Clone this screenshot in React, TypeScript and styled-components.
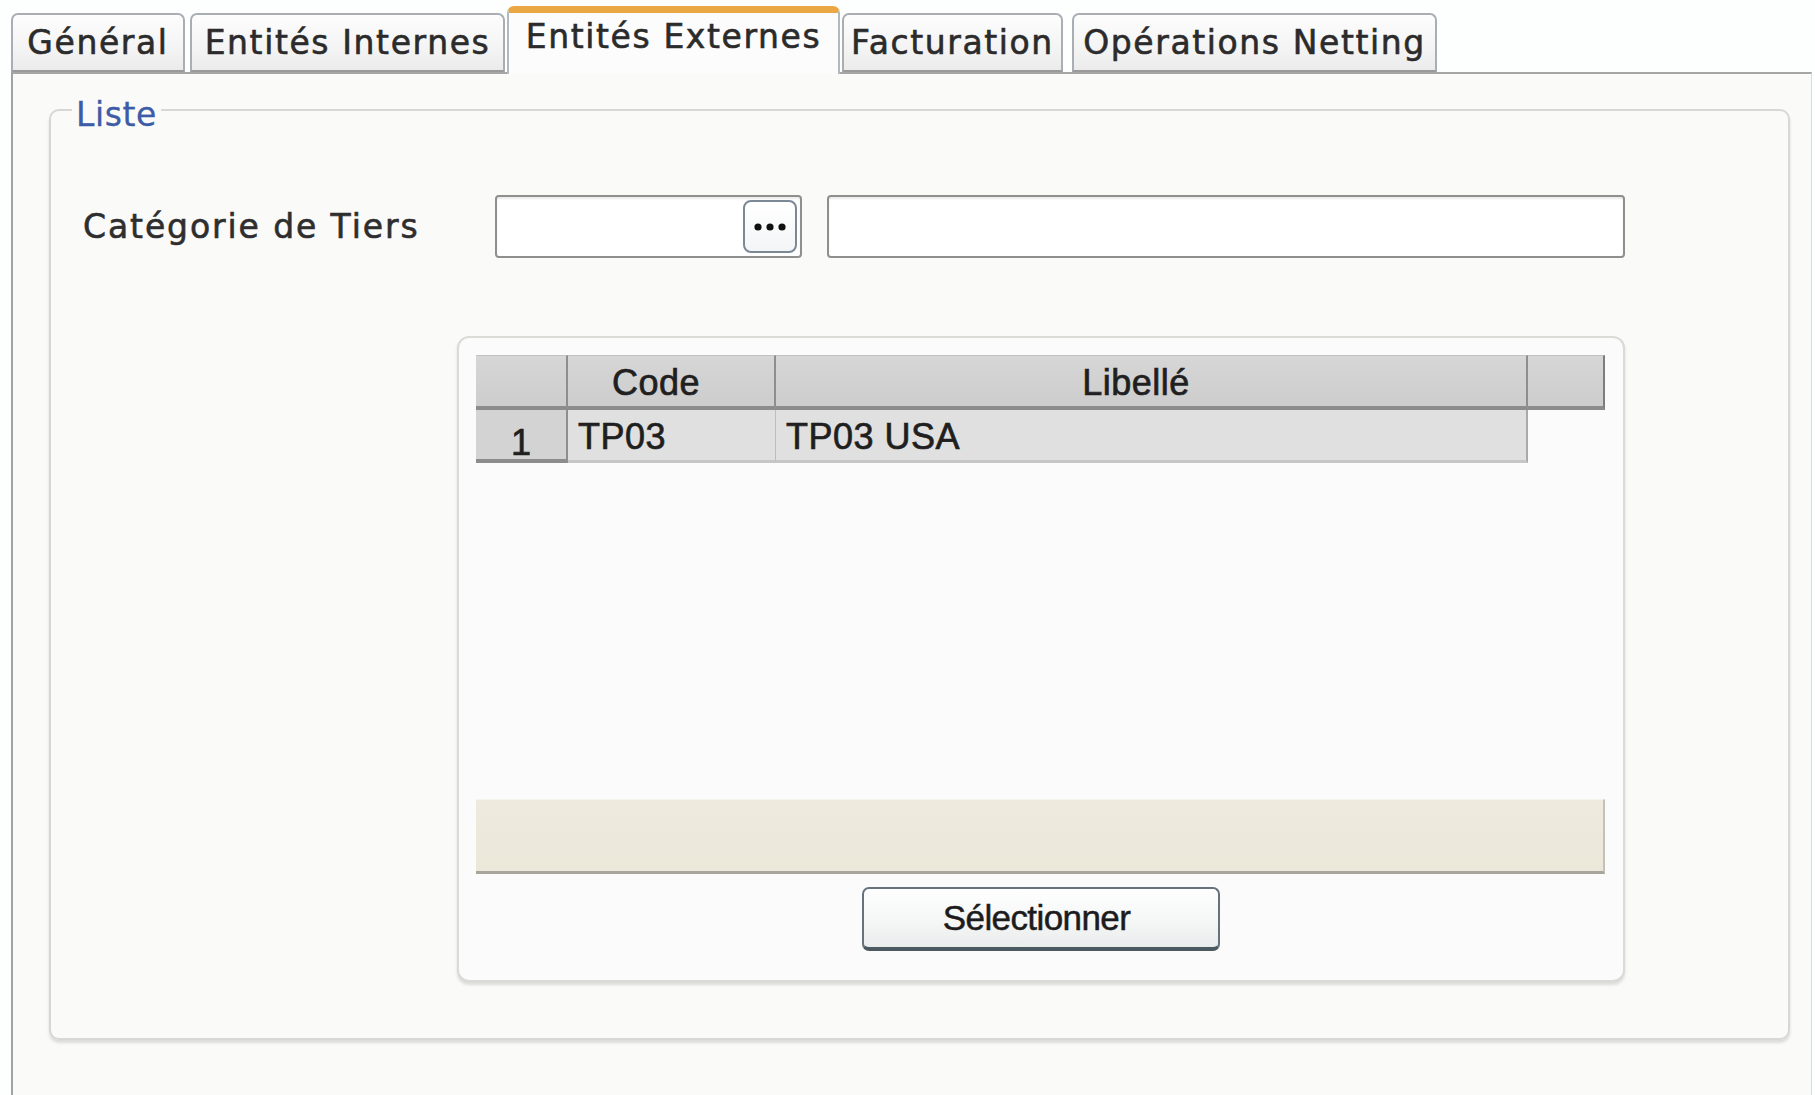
import React from "react";
import styled, { createGlobalStyle } from "styled-components";

const GlobalStyle = createGlobalStyle`
  html, body {
    margin: 0;
    padding: 0;
    background: #fdfefe;
  }
  #root {
    height: 100vh;
  }
  * {
    box-sizing: border-box;
  }
`;

const Page = styled.div`
  height: 100vh;
  display: flex;
  flex-direction: column;
  font-family: "DejaVu Sans", Verdana, sans-serif;
  color: #2a2a2a;
  overflow: hidden;
`;

const TabBar = styled.div`
  display: flex;
  align-items: flex-end;
  height: 72px;
  padding-left: 11px;
  position: relative;
  z-index: 2;
`;

const Tab = styled.div<{ $width: number; $gap: number; $active?: boolean }>`
  width: ${(p) => p.$width}px;
  margin-left: ${(p) => p.$gap}px;
  height: ${(p) => (p.$active ? 68 : 59)}px;
  margin-bottom: ${(p) => (p.$active ? -2 : 0)}px;
  display: flex;
  justify-content: center;
  align-items: flex-start;
  padding-top: ${(p) => (p.$active ? 6 : 10)}px;
  font-size: 33px;
  line-height: 36px;
  letter-spacing: 1.6px;
  white-space: nowrap;
  color: #2b2b2b;
  -webkit-text-stroke: 0.6px #2b2b2b;
  border: 2px solid ${(p) => (p.$active ? "#b4b8bd" : "#a9aeb5")};
  border-bottom: ${(p) => (p.$active ? "none" : "2px solid #9a9a9a")};
  border-top: ${(p) => (p.$active ? "7px solid #eaa743" : "2px solid #a9aeb5")};
  border-radius: 7px 7px 0 0;
  background: ${(p) =>
    p.$active
      ? "#fcfcfc"
      : "linear-gradient(180deg, #fdfdfd 0%, #f4f4f4 60%, #ebebeb 100%)"};
`;

const Panel = styled.div`
  flex: 1;
  margin-left: 11px;
  margin-right: 3px;
  border-left: 2px solid #a2a2a2;
  border-top: 2px solid #a6a6a6;
  border-right: 1px solid #dcdcdc;
  background: #fafaf9;
  padding: 0 21px 0 36px;
`;

const Group = styled.fieldset`
  margin: 14px 0 0 0;
  padding: 0;
  border: 2px solid #d7d7d3;
  border-radius: 10px;
  box-shadow: 0 3px 3px rgba(0, 0, 0, 0.12);
  min-width: 0;
`;

const Legend = styled.legend`
  margin-left: 21px;
  padding: 10px 4px 0 4px;
  font-size: 33px;
  line-height: 34px;
  letter-spacing: 0.6px;
  color: #3d5ba6;
  -webkit-text-stroke: 0.3px #3d5ba6;
`;

const GroupBody = styled.div`
  padding: 63px 0 56px 32px;
  display: flex;
  flex-direction: column;
`;

const FieldRow = styled.div`
  display: flex;
  align-items: center;
  height: 63px;
`;

const FieldLabel = styled.label`
  flex: 0 0 412px;
  font-size: 33px;
  letter-spacing: 1.9px;
  color: #2e2e2e;
  -webkit-text-stroke: 0.6px #2e2e2e;
  white-space: nowrap;
`;

const TextBox = styled.div<{ $width: number; $gap?: number }>`
  width: ${(p) => p.$width}px;
  margin-left: ${(p) => p.$gap ?? 0}px;
  height: 63px;
  background: #ffffff;
  border: 2px solid #8f8f8f;
  border-radius: 4px;
  box-shadow: inset 0 2px 2px rgba(0, 0, 0, 0.08);
  display: flex;
  justify-content: flex-end;
  align-items: center;
  padding-right: 3px;
`;

const DotsButton = styled.div`
  width: 54px;
  height: 53px;
  border: 2px solid #7b8896;
  border-radius: 8px;
  background: linear-gradient(180deg, #ffffff 0%, #f3f5f6 100%);
  display: flex;
  align-items: center;
  justify-content: center;
`;

const InnerPanel = styled.div`
  margin-top: 78px;
  margin-left: 374px;
  width: 1168px;
  height: 646px;
  border: 2px solid #dadad7;
  border-radius: 12px;
  background: #fbfbfb;
  box-shadow: 0 3px 3px rgba(0, 0, 0, 0.12);
  padding: 17px 18px 29px 17px;
  display: flex;
  flex-direction: column;
`;

const Grid = styled.div`
  display: grid;
  grid-template-columns: 92px 208px 752px 77px;
  grid-template-rows: 55px 53px;
  font-family: "Liberation Sans", Arial, sans-serif;
  font-size: 36px;
  color: #1f1f1f;
  -webkit-text-stroke: 0.7px #1f1f1f;
`;

const HeaderCell = styled.div<{ $last?: boolean }>`
  background: linear-gradient(180deg, #d6d6d6 0%, #cdcdcd 100%);
  border-top: 1px solid #c2c2c2;
  border-bottom: 4px solid #8c8c8c;
  border-right: 2px solid ${(p) => (p.$last ? "#7d7d7d" : "#8e8e8e")};
  display: flex;
  align-items: center;
  justify-content: center;
  padding-top: 3px;
  padding-right: 30px;
  letter-spacing: 0.5px;
`;

const RowHeadCell = styled.div`
  background: #d3d3d3;
  border-right: 2px solid #8e8e8e;
  border-bottom: 4px solid #8c8c8c;
  display: flex;
  align-items: flex-end;
  justify-content: center;
  line-height: 33px;
`;

const DataCell = styled.div<{ $edge?: boolean }>`
  background: #e0e0e0;
  border-bottom: 3px solid #c6c6c6;
  border-right: ${(p) => (p.$edge ? "2px solid #a9a9a9" : "1px solid #bdbdbd")};
  display: flex;
  align-items: center;
  padding-left: 10px;
  padding-top: 3px;
  letter-spacing: 0.5px;
`;

const EmptyCell = styled.div``;

const Spacer = styled.div`
  flex: 1;
`;

const StatusBar = styled.div`
  height: 75px;
  background: linear-gradient(180deg, #eeebde 0%, #ebe8da 100%);
  border-top: 1px solid #f6f4ec;
  border-right: 2px solid #c4c2b8;
  border-bottom: 3px solid #a8a69c;
`;

const ActionButton = styled.button`
  align-self: center;
  margin-top: 13px;
  width: 358px;
  height: 64px;
  border: 2px solid #66737c;
  border-bottom: 4px solid #4d5961;
  border-radius: 7px;
  background: linear-gradient(180deg, #ffffff 0%, #f6f7f7 50%, #eaeded 100%);
  font-family: "Liberation Sans", Arial, sans-serif;
  font-size: 35px;
  letter-spacing: -0.6px;
  color: #1c1c1c;
  -webkit-text-stroke: 0.5px #1c1c1c;
  padding: 0 8px 0 0;
  cursor: pointer;
`;

const tabs = [
  { label: "Général", width: 174, gap: 0 },
  { label: "Entités Internes", width: 315, gap: 5 },
  { label: "Entités Externes", width: 333, gap: 2, active: true },
  { label: "Facturation", width: 221, gap: 2 },
  { label: "Opérations Netting", width: 365, gap: 9 },
];

export default function App() {
  return (
    <>
      <GlobalStyle />
      <Page>
        <TabBar>
          {tabs.map((t) => (
            <Tab key={t.label} $width={t.width} $gap={t.gap} $active={t.active}>
              {t.label}
            </Tab>
          ))}
        </TabBar>
        <Panel>
          <Group>
            <Legend>Liste</Legend>
            <GroupBody>
              <FieldRow>
                <FieldLabel>Catégorie de Tiers</FieldLabel>
                <TextBox $width={307}>
                  <DotsButton>
                    <svg width="34" height="10" viewBox="0 0 34 10">
                      <circle cx="5" cy="5" r="3.6" fill="#111" />
                      <circle cx="17" cy="5" r="3.6" fill="#111" />
                      <circle cx="29" cy="5" r="3.6" fill="#111" />
                    </svg>
                  </DotsButton>
                </TextBox>
                <TextBox $width={798} $gap={25} />
              </FieldRow>
              <InnerPanel>
                <Grid>
                  <HeaderCell />
                  <HeaderCell>Code</HeaderCell>
                  <HeaderCell>Libellé</HeaderCell>
                  <HeaderCell $last />
                  <RowHeadCell>1</RowHeadCell>
                  <DataCell>TP03</DataCell>
                  <DataCell $edge>TP03 USA</DataCell>
                  <EmptyCell />
                </Grid>
                <Spacer />
                <StatusBar />
                <ActionButton>Sélectionner</ActionButton>
              </InnerPanel>
            </GroupBody>
          </Group>
        </Panel>
      </Page>
    </>
  );
}
